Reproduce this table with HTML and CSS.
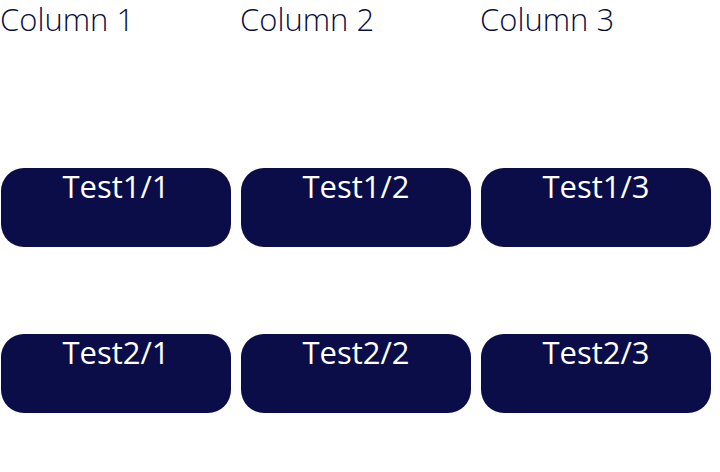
FILE: index.html
```html
<!DOCTYPE html>
<html>
<head>
<meta charset="utf-8">
<link rel="stylesheet" href="styles.css">
</head>
<body>
<div class="grid">
  <div class="head">Column 1</div>
  <div class="head">Column 2</div>
  <div class="head">Column 3</div>
  <div class="cell"><div class="btn">Test1/1</div></div>
  <div class="cell"><div class="btn">Test1/2</div></div>
  <div class="cell"><div class="btn">Test1/3</div></div>
  <div class="cell"><div class="btn">Test2/1</div></div>
  <div class="cell"><div class="btn">Test2/2</div></div>
  <div class="cell"><div class="btn">Test2/3</div></div>
</div>
</body>
</html>
```
FILE: styles.css
```css
html, body {
  margin: 0;
  background: #ffffff;
}
.grid {
  display: grid;
  grid-template-columns: repeat(3, 240px);
  row-gap: 87px;
}
.head {
  font-family: "Open Sans", "Lato", sans-serif;
  font-weight: 300;
  font-stretch: 88%;
  font-size: 31px;
  line-height: 38px;
  color: #0b1040;
  height: 81px;
}
.cell {
  padding-left: 1px;
}
.btn {
  width: 230px;
  height: 79px;
  box-sizing: border-box;
  border-radius: 23px;
  background: #0a0d48;
  color: #ffffff;
  text-align: center;
  font-family: "Open Sans", "Lato", sans-serif;
  font-weight: 400;
  font-stretch: 88%;
  font-size: 31px;
  line-height: 36px;
}
```
